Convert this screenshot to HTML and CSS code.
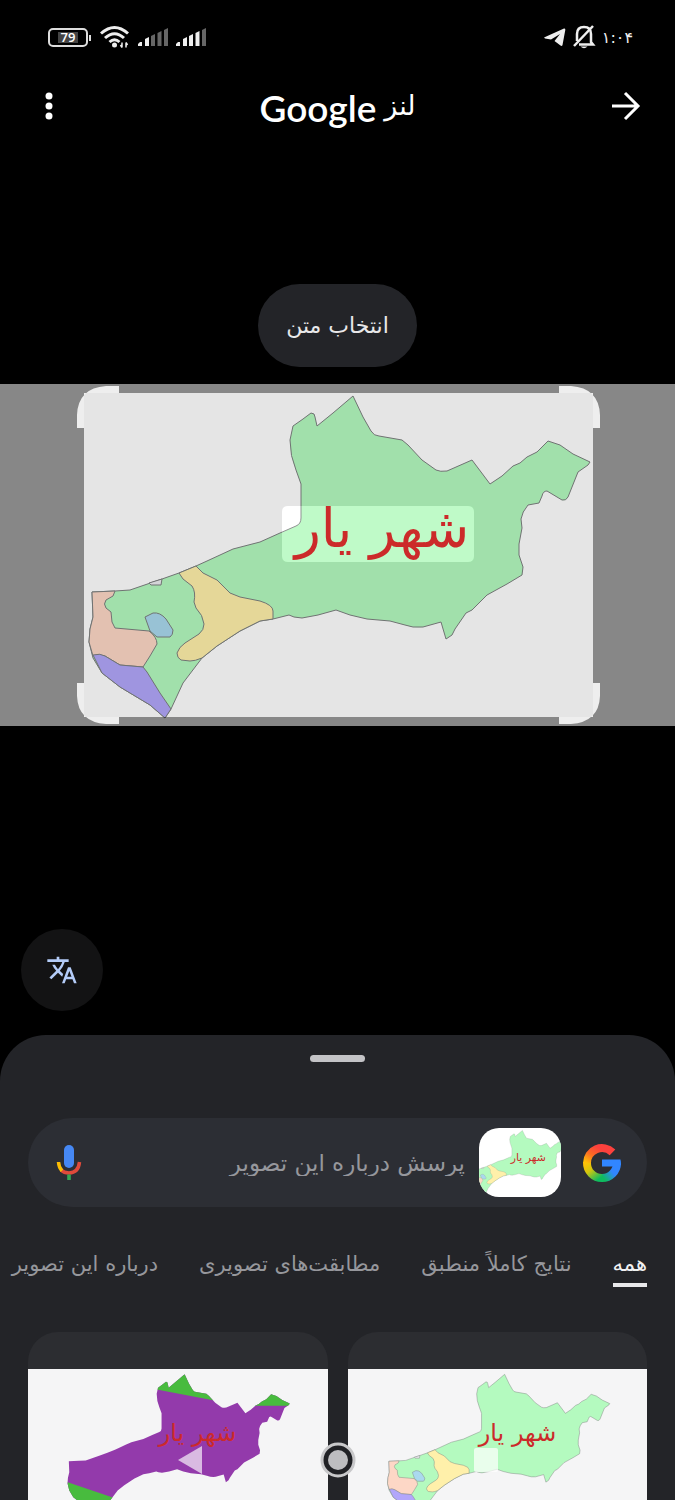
FILE: index.html
```html
<!DOCTYPE html>
<html lang="fa" dir="rtl">
  <head>
    <meta charset="utf-8">
    <meta name="viewport" content="width=device-width, initial-scale=1">
    <title>Google لنز</title>
    <link rel="stylesheet" href="styles.css">
  </head>
  <body>
    <!-- shared map drawing -->
    <svg class="defs" width="0" height="0" aria-hidden="true">
      <defs>
        <path id="county" d="M92 592L115 591L130 590L162 579L179 573L196 566L207 561L220 555L233 549L260 542L280 533L296 526Q301 524 301 518L301 484L296 470Q290 456 290 440L293 426L303 419L311 413Q315 413 315 417L317 426L333 413L353 396L363 417L371 431Q374 436 379 436L402 440L408 445L422 460L436 470Q440 472 447 471L472 460L490 484L502 476L513 466L520 463L527 457L537 452L548 441L560 445L573 454L590 462L588 465L578 472L568 497Q566 501 562 500L547 491Q543 491 542 496L539 503L528 505Q522 512 521 519L522 528L519 544L519 555L523 567L522 575L507 584L487 595L472 610L466 613L455 629L452 635L446 639L441 622L423 627Q412 628 405 625L390 621L367 619L350 615L336 610L318 615L302 618L294 617L289 615L273 619L260 621L240 631L217 646L202 658L183 683L171 709L165 718L150 705L120 687L102 673L93 658L89 642L90 629L93 617Z"/>
        <clipPath id="county-clip"><use href="#county"/></clipPath>
        <g id="districts" stroke="#7d8080" stroke-width="1" stroke-linejoin="round">
          <use href="#county" fill="#b4fabf"/>
          <path fill="#fff0aa" d="M179 573L196 566L203 573L217 580L230 593L240 597L260 601Q273 605 273 611L273 619L260 621L240 631L217 646L202 658Q195 661 190 661L181 660Q177 658 177 653Q179 647 185 643L199 634Q204 630 204 624Q203 615 196 608L194 602Q196 592 192 586L183 579Z"/>
          <path fill="#fdd7c6" d="M92 592L115 591L113 596L106 600Q103 604 106 608L111 612L112 622L115 628L149 631Q157 637 157 644L150 656L143 667L120 665L105 656Q98 653 93 656L89 642L90 629L93 617Z"/>
          <path fill="#b2a6fa" d="M93 655Q100 653 105 656L120 665L143 667L147 672L160 693L171 709L165 718L150 705L120 687L102 673Z"/>
          <path fill="#aad9ee" d="M145 617L153 613Q160 612 166 619L173 630Q173 635 170 637L157 637L150 631Z"/>
          <path fill="#ececf0" d="M149 583L151 585L161 585L162 579Z"/>
        </g>
        <text id="city" class="city" x="382" y="547" text-anchor="middle" direction="rtl">شهر یار</text>
      </defs>
    </svg>

    <div class="app">
      <header>
        <div class="status" dir="ltr">
          <div class="status-side">
            <div class="battery"><span>79</span></div>
            <svg class="wifi" width="30" height="24" viewBox="0 0 30 24">
              <g fill="none" stroke="#eee" stroke-width="3">
                <path d="M1 8.500Q14.500 -3.500 28 8.500"/>
                <path d="M5 13Q14.500 4.500 24 13"/>
                <path d="M9.500 17Q14.500 12.500 19.500 17"/>
              </g>
              <circle cx="14.500" cy="20" r="2.500" fill="#eee"/>
              <path d="M22 22.500v-5M20.500 20l1.500 2.500M26 17.500v5M26 17.500l1.500 2.500" stroke="#eee" stroke-width="1.500"/>
            </svg>
            <svg width="30" height="20" viewBox="0 0 30 20">
              <path fill="#eee" d="M0 19v-2l2-2h2v4zM7 19v-7l4-2v9z"/>
              <path fill="#666" d="M13 19v-10l4-2v12zM19.500 19v-13l4-2v15zM26 19v-16l4-2v18z"/>
            </svg>
            <svg width="30" height="20" viewBox="0 0 30 20">
              <path fill="#eee" d="M0 19v-2l2-2h2v4zM7 19v-7l4-2v9zM13 19v-10l4-2v12zM19.500 19v-13l4-2v15z"/>
              <path fill="#666" d="M26 19v-16l4-2v18z"/>
            </svg>
          </div>
          <div class="status-side alerts">
            <svg width="22" height="20" viewBox="0 0 22 20">
              <path fill="#eee" d="M0 10.500L20 1.500Q21.500 1 21.300 3L18.500 18Q18 19.500 16.500 18.500L10.500 14L16 7L7 12.500L1 11.500Z"/>
            </svg>
            <svg width="24" height="26" viewBox="0 0 24 26">
              <path fill="none" stroke="#eee" stroke-width="2.500" d="M5 17V10Q5 3 12 3Q19 3 19 10V18L21 20.500H7"/>
              <path stroke="#eee" stroke-width="2.500" d="M2 22L21 2"/>
              <path fill="#eee" d="M8.500 22.500h7q-3.500 3.500-7 0z"/>
            </svg>
            <time class="clock" dir="rtl">۱:۰۴</time>
          </div>
        </div>
        <div class="topbar">
          <button class="icon-btn" aria-label="بازگشت">
            <svg width="30" height="30" viewBox="0 0 30 30"><path fill="none" stroke="#fff" stroke-width="3" d="M1 15h25M14 2l13 13l-13 13"/></svg>
          </button>
          <h1><span>لنز</span> <span class="wordmark">Google</span></h1>
          <button class="icon-btn" aria-label="گزینه‌های بیشتر">
            <svg width="30" height="30" viewBox="0 0 30 30" fill="#fff"><circle cx="15" cy="5" r="3.500"/><circle cx="15" cy="15" r="3.500"/><circle cx="15" cy="25" r="3.500"/></svg>
          </button>
        </div>
      </header>

      <main class="stage">
        <button class="pill">انتخاب متن</button>
        <svg class="photo" viewBox="0 384 675 342" role="img" aria-label="نقشه شهریار">
          <rect y="384" width="675" height="342" fill="#fff"/>
          <use href="#districts"/>
          <!-- dim everything except the detected word -->
          <path fill="#000" fill-opacity=".1" fill-rule="evenodd" d="M84 393H593V717H84ZM288 506Q282 506 282 512V556Q282 562 288 562H468Q474 562 474 556V512Q474 506 468 506Z"/>
          <rect x="282" y="506" width="192" height="56" rx="6" fill="#fff" fill-opacity=".15"/>
          <path fill="#000" fill-opacity=".47" fill-rule="evenodd" d="M0 384H675V726H0ZM84 393V717H593V393Z"/>
          <use href="#city"/>
          <g fill="#eee">
            <path d="M77 428V415Q78 388 106 386H119V393H84V428Z"/>
            <path d="M600 428V415Q599 388 571 386H559V393H593V428Z"/>
            <path d="M77 683V696Q78 722 106 724H119V717H84V683Z"/>
            <path d="M600 683V696Q599 722 571 724H559V717H593V683Z"/>
          </g>
        </svg>
        <button class="translate" aria-label="ترجمه">
          <svg width="32" height="32" viewBox="0 0 24 24"><path fill="#b4ccf8" d="M12.870 15.070l-2.540-2.510.03-.03A17.520 17.520 0 0 0 14.070 6H17V4h-7V2H8v2H1v2h11.170C11.500 7.920 10.440 9.750 9 11.350 8.070 10.320 7.300 9.190 6.690 8h-2c.73 1.630 1.730 3.170 2.980 4.560l-5.090 5.020L4 19l5-5 3.110 3.110.76-2.040zM18.500 10h-2L12 22h2l1.120-3h4.750L21 22h2l-4.500-12zm-2.620 7l1.620-4.330L19.120 17h-3.240z"/></svg>
        </button>
      </main>

      <section class="sheet">
        <div class="grip"></div>
        <form class="search">
          <svg class="g-logo" width="40" height="40" viewBox="0 0 40 40" aria-hidden="true">
            <defs>
              <linearGradient id="g1" gradientUnits="userSpaceOnUse" x1="15" y1="4" x2="5" y2="20"><stop stop-color="#fc413d"/><stop offset=".5" stop-color="#fc6c22"/><stop offset="1" stop-color="#ffc107"/></linearGradient>
              <linearGradient id="g2" gradientUnits="userSpaceOnUse" x1="4" y1="20" x2="17" y2="36"><stop stop-color="#ffc107"/><stop offset=".4" stop-color="#d5c70d"/><stop offset="1" stop-color="#0ebc5f"/></linearGradient>
              <linearGradient id="g3" gradientUnits="userSpaceOnUse" x1="22" y1="36" x2="34" y2="26"><stop stop-color="#0ebc5f"/><stop offset=".7" stop-color="#3186ff"/></linearGradient>
            </defs>
            <g fill="none" stroke-width="8">
              <path stroke="url(#g3)" d="M20 35A15 15 0 0 0 35 20"/>
              <path stroke="url(#g2)" d="M5 19.500A15 15 0 0 0 20.500 35"/>
              <path stroke="url(#g1)" d="M30.500 9.400A15 15 0 0 0 5 20"/>
            </g>
            <path fill="#3186ff" d="M20 16.500H38.500Q39 18 39 22L36 23.500H20Z"/>
          </svg>
          <svg class="thumb" viewBox="138 384 406 342" preserveAspectRatio="xMidYMid slice" aria-hidden="true">
            <use href="#districts"/>
            <use href="#city"/>
          </svg>
          <input type="text" aria-label="پرسش درباره این تصویر" placeholder="پرسش درباره این تصویر">
          <button type="button" class="icon-btn" aria-label="جستجوی صوتی">
            <svg width="26" height="36" viewBox="0 0 26 36">
              <rect x="8" y="0" width="10" height="23" rx="5" fill="#4688f4"/>
              <path fill="none" stroke="#e04a3b" stroke-width="3.500" d="M5 25Q8 28 13 28Q22.500 27.500 23.500 17"/>
              <path fill="none" stroke="#fbbc04" stroke-width="3.500" d="M2.500 17Q2.800 22.500 6 25.800"/>
              <path fill="#34a853" d="M11.200 29.500h3.600v5.500h-3.600z"/>
            </svg>
          </button>
        </form>

        <nav class="tabs">
          <a class="tab active" href="#all">همه</a>
          <a class="tab" href="#exact">نتایج کاملاً منطبق</a>
          <a class="tab" href="#visual">مطابقت‌های تصویری</a>
          <a class="tab" href="#about">درباره این تصویر</a>
        </nav>

        <div class="results">
          <a class="card" href="#r1" aria-label="نقشه شهریار">
            <svg viewBox="0 384 675 342">
              <use href="#districts"/>
              <use href="#city"/>
            </svg>
          </a>
          <a class="card" href="#r2" aria-label="نقشه شهریار">
            <svg viewBox="0 384 675 342">
              <use href="#county" fill="#933aab"/>
              <g clip-path="url(#county-clip)" fill="#48bb3e">
                <path d="M280 390H390L420 455L290 430Z"/>
                <path d="M500 467H600V430H530Z"/>
                <path d="M80 636L210 680V730H80Z"/>
              </g>
              <use href="#city"/>
            </svg>
          </a>
        </div>
      </section>

      <div class="sysnav" dir="ltr">
        <button aria-label="قبلی"><svg width="36" height="36" viewBox="0 0 36 36"><path fill="#fff" fill-opacity=".65" d="M6 18L30 4V32Z"/></svg></button>
        <button aria-label="خانه"><svg width="36" height="36" viewBox="0 0 36 36"><circle cx="18" cy="18" r="16" fill="#202125" stroke="#c8c8ca" stroke-width="3"/><circle cx="18" cy="18" r="10" fill="#bdbdc0"/></svg></button>
        <button aria-label="برنامه‌ها"><svg width="36" height="36" viewBox="0 0 36 36"><rect x="6" y="6" width="24" height="24" rx="2" fill="#fff" fill-opacity=".7"/></svg></button>
      </div>
    </div>
  </body>
</html>
```

FILE: styles.css
```css
* {
  box-sizing: border-box;
}
body {
  margin: 0;
  background: #000;
  color: #fff;
  font-family: "DejaVu Sans", sans-serif;
}
button {
  border: none;
  padding: 0;
  background: none;
  color: inherit;
  font: inherit;
}
svg {
  display: block;
  flex: none;
}
a {
  color: inherit;
  text-decoration: none;
}
.defs {
  position: absolute;
}
.city {
  font-family: "DejaVu Sans", sans-serif;
  font-size: 54px;
  fill: #cc2a2a;
}
.app {
  position: relative;
  height: 100vh;
  overflow: hidden;
  display: flex;
  flex-direction: column;
}

/* STATUS BAR ================================== */
.status {
  display: flex;
  align-items: center;
  justify-content: space-between;
  height: 74px;
  padding: 0 42px 0 48px;
}
.status-side {
  display: flex;
  align-items: center;
  gap: 8px;
}
.alerts {
  gap: 6px;
}
.battery {
  position: relative;
  width: 40px;
  height: 19px;
  padding: 2px 8px;
  border: 2px solid #ddd;
  border-radius: 5px;
  font: 600 13px/11px "Open Sans", sans-serif;
  text-align: center;
}
.battery span {
  display: block;
  background: #444;
}
.battery::after {
  content: '';
  position: absolute;
  right: -5px;
  top: 5px;
  width: 2px;
  height: 6px;
  background: #ddd;
}
.wifi {
  margin-left: 4px;
}
.clock {
  font-size: 16px;
  color: #eee;
}

/* TOP BAR ===================================== */
.topbar {
  display: flex;
  align-items: center;
  justify-content: space-between;
  height: 64px;
  padding: 0 34px;
}
h1 {
  display: flex;
  align-items: center;
  gap: 8px;
  margin: 0;
  font-size: 27px;
  font-weight: normal;
  line-height: 40px;
}
.wordmark {
  padding-top: 4px;
  font-family: Lato, sans-serif;
  font-size: 37px;
  font-weight: 600;
}

/* STAGE ======================================= */
.stage {
  display: flex;
  flex-direction: column;
  align-items: center;
  padding-top: 146px;
}
.pill {
  height: 83px;
  padding: 0 28px;
  margin-bottom: 17px;
  border-radius: 42px;
  background: #232428;
  color: #e8e8ea;
  font-size: 22px;
}
.photo {
  width: 100%;
}
.translate {
  display: flex;
  align-items: center;
  justify-content: center;
  align-self: flex-end;
  width: 82px;
  height: 82px;
  margin: 203px 0 24px 21px;
  border-radius: 50%;
  background: #131314;
}

/* BOTTOM SHEET ================================ */
.sheet {
  flex: 1 0 auto;
  padding: 20px 28px 0;
  border-radius: 46px 46px 0 0;
  background: #232428;
}
.grip {
  width: 55px;
  height: 7px;
  margin: 0 auto 56px;
  border-radius: 4px;
  background: #c3c3c6;
}
.search {
  display: flex;
  align-items: center;
  height: 89px;
  padding: 0 25px 0 28px;
  border-radius: 45px;
  background: #2c2e34;
}
.thumb {
  width: 82px;
  height: 69px;
  margin: 0 21px 0 14px;
  border-radius: 20px;
  background: #fff;
}
.search input {
  flex: 1;
  min-width: 0;
  height: 48px;
  padding: 0;
  border: none;
  outline: none;
  background: none;
  color: #fff;
  font: inherit;
  font-size: 23px;
  line-height: 40px;
}
.search input::placeholder {
  color: #96979c;
  line-height: 40px;
  opacity: 1;
}
.tabs {
  display: flex;
  gap: 41px;
  margin-top: 38px;
  white-space: nowrap;
}
.tab {
  height: 42px;
  line-height: 38px;
  color: #96979c;
  font-size: 21px;
}
.active {
  color: #f1f1f3;
  border-bottom: 4px solid #e8e8ea;
}
.results {
  display: flex;
  gap: 20px;
  margin-top: 45px;
}
.card {
  flex: 1;
  padding-top: 37px;
  border-radius: 30px 30px 0 0;
  background: #2c2d31;
}
.card svg {
  width: 100%;
  background: #f5f5f6;
}

/* SYSTEM NAVIGATION =========================== */
.sysnav {
  position: absolute;
  left: 0;
  right: 0;
  bottom: 22px;
  display: flex;
  justify-content: center;
  gap: 112px;
}
```
